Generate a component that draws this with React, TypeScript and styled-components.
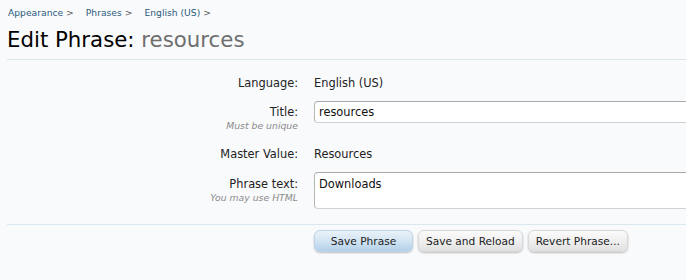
import React from "react";
import styled, { createGlobalStyle } from "styled-components";

const Global = createGlobalStyle`
  html, body { margin: 0; padding: 0; background: #f9fafc; overflow: hidden; }
  body { font-family: "DejaVu Sans", Verdana, sans-serif; color: #222; }
`;

const Page = styled.div`
  width: 686px;
  height: 280px;
  overflow: hidden;
  padding: 6px 0 0 7px;
  box-sizing: border-box;
`;

const Crumbs = styled.nav`
  display: flex;
  height: 14px;
  line-height: 14px;
  font-size: 9.2px;
  padding-left: 1px;
`;

const Crumb = styled.span`
  color: #2b5a7c;
  margin-right: 12px;
  &::after {
    content: " >";
    color: #555;
  }
`;

const Title = styled.h1`
  margin: 7px 0 0;
  font-weight: normal;
  font-size: 21.3px;
  line-height: 26px;
  color: #000;
  padding-bottom: 6px;
  border-bottom: 1px solid #d9e6ec;
`;

const TitleSub = styled.span`
  color: #6e6e6e;
`;

const Form = styled.div`
  display: flex;
  flex-direction: column;
`;

const Row = styled.div<{ $top: number }>`
  display: grid;
  grid-template-columns: 291px 1fr;
  column-gap: 16px;
  align-items: start;
  margin-top: ${(p) => p.$top}px;
`;

const Label = styled.div<{ $pad?: number }>`
  text-align: right;
  padding-top: ${(p) => p.$pad || 0}px;
  font-size: 11.4px;
  line-height: 16px;
  color: #222;
`;

const Hint = styled.div`
  font-size: 9.3px;
  line-height: 12px;
  font-style: italic;
  color: #8a8a8a;
`;

const Value = styled.div`
  font-size: 11.4px;
  line-height: 16px;
  color: #222;
`;

const TextInput = styled.div`
  width: 420px;
  box-sizing: border-box;
  height: 22px;
  padding: 0 4px;
  font-size: 11.4px;
  line-height: 20px;
  background: #fff;
  border: 1px solid #cfcfcf;
  border-top-color: #a9a9a9;
  border-left-color: #b5b5b5;
  border-radius: 4px;
  color: #111;
`;

const TextArea = styled.div`
  width: 420px;
  box-sizing: border-box;
  height: 37px;
  padding: 3px 4px 0;
  font-size: 11.4px;
  line-height: 16px;
  background: #fff;
  border: 1px solid #d2d2d2;
  border-top-color: #a9a9a9;
  border-left-color: #b5b5b5;
  border-radius: 4px;
  color: #111;
`;

const Footer = styled.div`
  margin-top: 15px;
  border-top: 1px solid #d9e8ef;
  padding: 5px 0 0 307px;
  display: flex;
  gap: 5px;
`;

const Button = styled.button<{ $primary?: boolean }>`
  min-width: 99px;
  height: 22px;
  padding: 0 7px;
  font-family: "DejaVu Sans", Verdana, sans-serif;
  font-size: 10.6px;
  color: #222;
  border: 1px solid ${(p) => (p.$primary ? "#bfd4e6" : "#d8d8d8")};
  border-radius: 6px;
  background: ${(p) =>
    p.$primary
      ? "linear-gradient(to bottom, #eaf2f9 0%, #d2e4f2 50%, #b2d0e9 100%)"
      : "linear-gradient(to bottom, #fbfbfb 0%, #eeeeee 55%, #e0e0e0 100%)"};
  box-shadow: 0 1px 2px rgba(0, 0, 0, 0.25);
  cursor: pointer;
`;

export default function App() {
  return (
    <>
      <Global />
      <Page>
        <Crumbs>
          <Crumb>Appearance</Crumb>
          <Crumb>Phrases</Crumb>
          <Crumb>English (US)</Crumb>
        </Crumbs>
        <Title>
          Edit Phrase: <TitleSub>resources</TitleSub>
        </Title>
        <Form>
          <Row $top={15}>
            <Label>Language:</Label>
            <Value>English (US)</Value>
          </Row>
          <Row $top={10}>
            <Label $pad={3}>
              Title:
              <Hint>Must be unique</Hint>
            </Label>
            <TextInput>resources</TextInput>
          </Row>
          <Row $top={14}>
            <Label>Master Value:</Label>
            <Value>Resources</Value>
          </Row>
          <Row $top={10}>
            <Label $pad={4}>
              Phrase text:
              <Hint>You may use HTML</Hint>
            </Label>
            <TextArea>Downloads</TextArea>
          </Row>
        </Form>
        <Footer>
          <Button $primary>Save Phrase</Button>
          <Button>Save and Reload</Button>
          <Button>Revert Phrase...</Button>
        </Footer>
      </Page>
    </>
  );
}
